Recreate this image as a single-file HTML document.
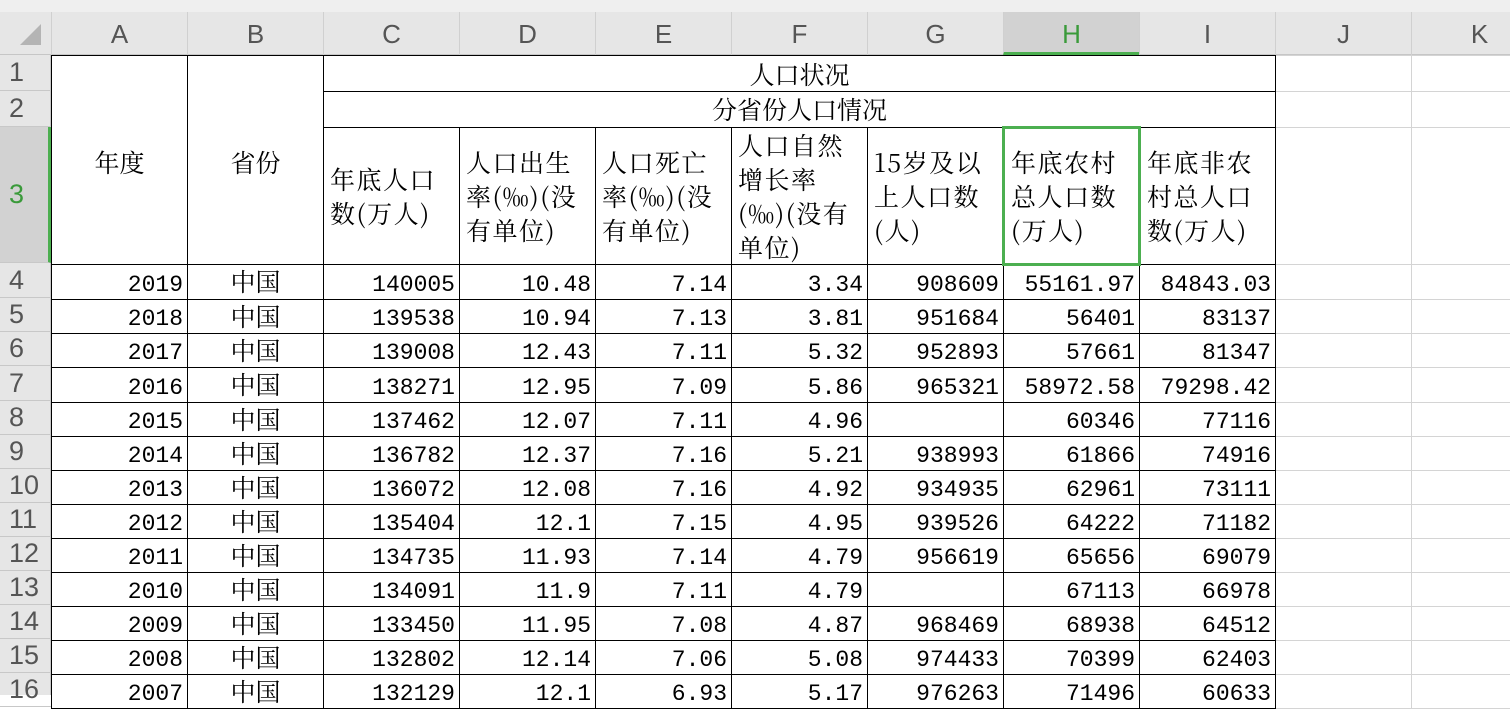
<!DOCTYPE html>
<html><head><meta charset="utf-8">
<style>
*{margin:0;padding:0;box-sizing:border-box}
body{width:1510px;height:694px;overflow:hidden;background:#fff;position:relative;font-family:"Liberation Sans",sans-serif}
#top{position:absolute;left:0;top:0;width:1510px;height:12px;background:#efefef}
#colhdr{position:absolute;left:0;top:12px;width:1510px;height:43px;background:#e6e6e6;border-bottom:1px solid #c6c6c6}
.ch{position:absolute;top:12px;height:43px;width:136px;border-left:1px solid #d0d0d0;text-align:center;font-size:26px;line-height:44px;color:#555}
.ch.sel{background:#d2d2d2;color:#3a9a3a;border-bottom:3px solid #4caf50}
#rowhdr{position:absolute;left:0;top:55px;width:51px;height:640px;background:#e6e6e6;border-right:1px solid #c6c6c6}
.rh{position:absolute;left:0;width:51px;border-bottom:1px solid #c8c8c8;font-size:27px;color:#555;padding-left:9px;display:flex;align-items:center}
.rh.sel{background:#d2d2d2;color:#3a9a3a;border-right:3px solid #4caf50}
table{position:absolute;left:51px;top:55px;border-collapse:collapse;table-layout:fixed;width:1496px}
col{width:136px}
td{border:1px solid #000;font-family:"Noto Serif CJK SC","Liberation Serif",serif;font-size:25px;line-height:28px;color:#000;overflow:hidden;white-space:nowrap;padding:0}
td.g{border:1px solid #d4d4d4}
td.n{font-family:"Liberation Mono",monospace;font-size:23px;text-align:right;padding-right:4px;vertical-align:bottom;padding-bottom:0}
td.c{text-align:center;vertical-align:middle;padding-bottom:2px}
td.h{white-space:normal;line-height:34px;padding-left:6px;vertical-align:middle;font-size:25px;letter-spacing:1.5px}
</style></head><body>
<div id="top"></div>
<div id="colhdr"></div>
<svg style="position:absolute;left:20px;top:24px" width="22" height="22"><polygon points="21,0 21,21 0,21" fill="#b4b4b4"/></svg>
<div class="ch" style="left:51px">A</div>
<div class="ch" style="left:187px">B</div>
<div class="ch" style="left:323px">C</div>
<div class="ch" style="left:459px">D</div>
<div class="ch" style="left:595px">E</div>
<div class="ch" style="left:731px">F</div>
<div class="ch" style="left:867px">G</div>
<div class="ch sel" style="left:1003px">H</div>
<div class="ch" style="left:1139px">I</div>
<div class="ch" style="left:1275px">J</div>
<div class="ch" style="left:1411px">K</div>
<div id="rowhdr"></div>
<div class="rh" style="top:55px;height:36px">1</div>
<div class="rh" style="top:91px;height:36px">2</div>
<div class="rh sel" style="top:127px;height:136px">3</div>
<div class="rh" style="top:263px;height:35px">4</div>
<div class="rh" style="top:298px;height:34px">5</div>
<div class="rh" style="top:332px;height:34px">6</div>
<div class="rh" style="top:366px;height:35px">7</div>
<div class="rh" style="top:401px;height:34px">8</div>
<div class="rh" style="top:435px;height:34px">9</div>
<div class="rh" style="top:469px;height:34px">10</div>
<div class="rh" style="top:503px;height:34px">11</div>
<div class="rh" style="top:537px;height:34px">12</div>
<div class="rh" style="top:571px;height:34px">13</div>
<div class="rh" style="top:605px;height:34px">14</div>
<div class="rh" style="top:639px;height:34px">15</div>
<div class="rh" style="top:673px;height:34px">16</div>
<table>
<colgroup><col><col><col><col><col><col><col><col><col><col><col></colgroup>
<tr style="height:36px"><td rowspan="3" style="vertical-align:top;text-align:center;padding-top:92px">年度</td><td rowspan="3" style="vertical-align:top;text-align:center;padding-top:92px">省份</td><td colspan="7" style="text-align:center">人口状况</td><td class="g"></td><td class="g"></td></tr>
<tr style="height:36px"><td colspan="7" style="text-align:center">分省份人口情况</td><td class="g"></td><td class="g"></td></tr>
<tr style="height:136px"><td class="h">年底人口<br>数(万人)</td><td class="h">人口出生<br>率(‰)(没<br>有单位)</td><td class="h">人口死亡<br>率(‰)(没<br>有单位)</td><td class="h">人口自然<br>增长率<br>(‰)(没有<br>单位)</td><td class="h">15岁及以<br>上人口数<br>(人)</td><td class="h" style="border:3px solid #4caf50">年底农村<br>总人口数<br>(万人)</td><td class="h">年底非农<br>村总人口<br>数(万人)</td><td class="g"></td><td class="g"></td></tr>
<tr style="height:35px"><td class="n">2019</td><td class="c">中国</td><td class="n">140005</td><td class="n">10.48</td><td class="n">7.14</td><td class="n">3.34</td><td class="n">908609</td><td class="n">55161.97</td><td class="n">84843.03</td><td class="g"></td><td class="g"></td></tr>
<tr style="height:34px"><td class="n">2018</td><td class="c">中国</td><td class="n">139538</td><td class="n">10.94</td><td class="n">7.13</td><td class="n">3.81</td><td class="n">951684</td><td class="n">56401</td><td class="n">83137</td><td class="g"></td><td class="g"></td></tr>
<tr style="height:34px"><td class="n">2017</td><td class="c">中国</td><td class="n">139008</td><td class="n">12.43</td><td class="n">7.11</td><td class="n">5.32</td><td class="n">952893</td><td class="n">57661</td><td class="n">81347</td><td class="g"></td><td class="g"></td></tr>
<tr style="height:35px"><td class="n">2016</td><td class="c">中国</td><td class="n">138271</td><td class="n">12.95</td><td class="n">7.09</td><td class="n">5.86</td><td class="n">965321</td><td class="n">58972.58</td><td class="n">79298.42</td><td class="g"></td><td class="g"></td></tr>
<tr style="height:34px"><td class="n">2015</td><td class="c">中国</td><td class="n">137462</td><td class="n">12.07</td><td class="n">7.11</td><td class="n">4.96</td><td class="n"></td><td class="n">60346</td><td class="n">77116</td><td class="g"></td><td class="g"></td></tr>
<tr style="height:34px"><td class="n">2014</td><td class="c">中国</td><td class="n">136782</td><td class="n">12.37</td><td class="n">7.16</td><td class="n">5.21</td><td class="n">938993</td><td class="n">61866</td><td class="n">74916</td><td class="g"></td><td class="g"></td></tr>
<tr style="height:34px"><td class="n">2013</td><td class="c">中国</td><td class="n">136072</td><td class="n">12.08</td><td class="n">7.16</td><td class="n">4.92</td><td class="n">934935</td><td class="n">62961</td><td class="n">73111</td><td class="g"></td><td class="g"></td></tr>
<tr style="height:34px"><td class="n">2012</td><td class="c">中国</td><td class="n">135404</td><td class="n">12.1</td><td class="n">7.15</td><td class="n">4.95</td><td class="n">939526</td><td class="n">64222</td><td class="n">71182</td><td class="g"></td><td class="g"></td></tr>
<tr style="height:34px"><td class="n">2011</td><td class="c">中国</td><td class="n">134735</td><td class="n">11.93</td><td class="n">7.14</td><td class="n">4.79</td><td class="n">956619</td><td class="n">65656</td><td class="n">69079</td><td class="g"></td><td class="g"></td></tr>
<tr style="height:34px"><td class="n">2010</td><td class="c">中国</td><td class="n">134091</td><td class="n">11.9</td><td class="n">7.11</td><td class="n">4.79</td><td class="n"></td><td class="n">67113</td><td class="n">66978</td><td class="g"></td><td class="g"></td></tr>
<tr style="height:34px"><td class="n">2009</td><td class="c">中国</td><td class="n">133450</td><td class="n">11.95</td><td class="n">7.08</td><td class="n">4.87</td><td class="n">968469</td><td class="n">68938</td><td class="n">64512</td><td class="g"></td><td class="g"></td></tr>
<tr style="height:34px"><td class="n">2008</td><td class="c">中国</td><td class="n">132802</td><td class="n">12.14</td><td class="n">7.06</td><td class="n">5.08</td><td class="n">974433</td><td class="n">70399</td><td class="n">62403</td><td class="g"></td><td class="g"></td></tr>
<tr style="height:34px"><td class="n">2007</td><td class="c">中国</td><td class="n">132129</td><td class="n">12.1</td><td class="n">6.93</td><td class="n">5.17</td><td class="n">976263</td><td class="n">71496</td><td class="n">60633</td><td class="g"></td><td class="g"></td></tr>
</table>
</body></html>
